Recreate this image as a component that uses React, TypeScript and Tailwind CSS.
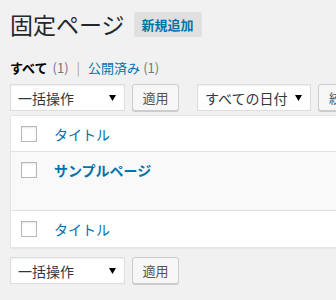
const FONT = { fontFamily: '"Noto Sans CJK JP", "Noto Sans", sans-serif' };

function Arrow() {
  return (
    <svg width="7" height="6" viewBox="0 0 7 6" className="shrink-0">
      <path d="M0 0 H7 L3.5 6 Z" fill="#000" />
    </svg>
  );
}

function Select({ label, w }: { label: string; w: string }) {
  return (
    <div
      className={`${w} h-[27px] shrink-0 flex items-center justify-between pl-[7px] pr-[8px] bg-white border border-[#ddd] shadow-[inset_0_1px_2px_rgba(0,0,0,0.07)] text-[14px] text-[#32373c]`}
    >
      <span className="leading-[20px]">{label}</span>
      <Arrow />
    </div>
  );
}

function Button({ label, w }: { label: string; w: string }) {
  return (
    <div
      className={`${w} h-[27px] shrink-0 flex items-center justify-center bg-[#f7f7f7] border border-[#ccc] rounded-[3px] shadow-[0_1px_0_#ccc] text-[13px] text-[#555]`}
    >
      {label}
    </div>
  );
}

function Checkbox() {
  return <div className="w-[16px] h-[16px] shrink-0 bg-white border border-[#b4b9be] shadow-[inset_0_1px_2px_rgba(0,0,0,0.1)]" />;
}

export default function App() {
  return (
    <div className="w-[336px] h-[300px] overflow-hidden bg-[#f1f1f1]" style={FONT}>
      <div className="w-[440px] pl-[10px] pt-[10px]">
        <div className="h-[29px] flex items-center">
          <h1 className="text-[23px] leading-[29px] font-normal text-[#23282d]">固定ページ</h1>
          <div className="ml-[9px] h-[25px] px-[8px] flex items-center bg-[#e0e0e0] rounded-[2px] text-[13px] font-bold text-[#0073aa]">
            新規追加
          </div>
        </div>

        <div className="mt-[21px] h-[16px] flex items-center text-[13px] leading-[16px]">
          <span className="font-bold text-black">すべて</span>
          <span className="ml-[5px] text-[#72777c]">(1)</span>
          <span className="ml-[8px] text-[#a0a5aa]">|</span>
          <span className="ml-[8px] text-[#0073aa]">公開済み</span>
          <span className="ml-[3px] text-[#72777c]">(1)</span>
        </div>

        <div className="mt-[8px] flex items-center">
          <Select label="一括操作" w="w-[115px]" />
          <div className="ml-[7px]"><Button label="適用" w="w-[47px]" /></div>
          <div className="ml-[18px]"><Select label="すべての日付" w="w-[114px]" /></div>
          <div className="ml-[7px]"><Button label="絞り込み検索" w="w-[100px]" /></div>
        </div>

        <div className="mt-[4px] w-[430px] bg-white border border-[#e5e5e5] shadow-[0_1px_1px_rgba(0,0,0,0.04)]">
          <div className="h-[36px] flex items-center border-b border-[#e1e1e1] pl-[10px]">
            <Checkbox />
            <span className="ml-[17px] text-[14px] leading-[20px] text-[#0073aa]">タイトル</span>
          </div>
          <div className="h-[59px] flex items-start border-b border-[#e1e1e1] bg-[#f9f9f9] pl-[10px]">
            <div className="mt-[10px]"><Checkbox /></div>
            <span className="ml-[17px] mt-[8px] text-[14px] leading-[20px] font-bold text-[#0073aa]">サンプルページ</span>
          </div>
          <div className="h-[36px] flex items-center pl-[10px]">
            <Checkbox />
            <span className="ml-[17px] text-[14px] leading-[20px] text-[#0073aa]">タイトル</span>
          </div>
        </div>

        <div className="mt-[9px] flex items-center">
          <Select label="一括操作" w="w-[115px]" />
          <div className="ml-[7px]"><Button label="適用" w="w-[47px]" /></div>
        </div>
      </div>
    </div>
  );
}
